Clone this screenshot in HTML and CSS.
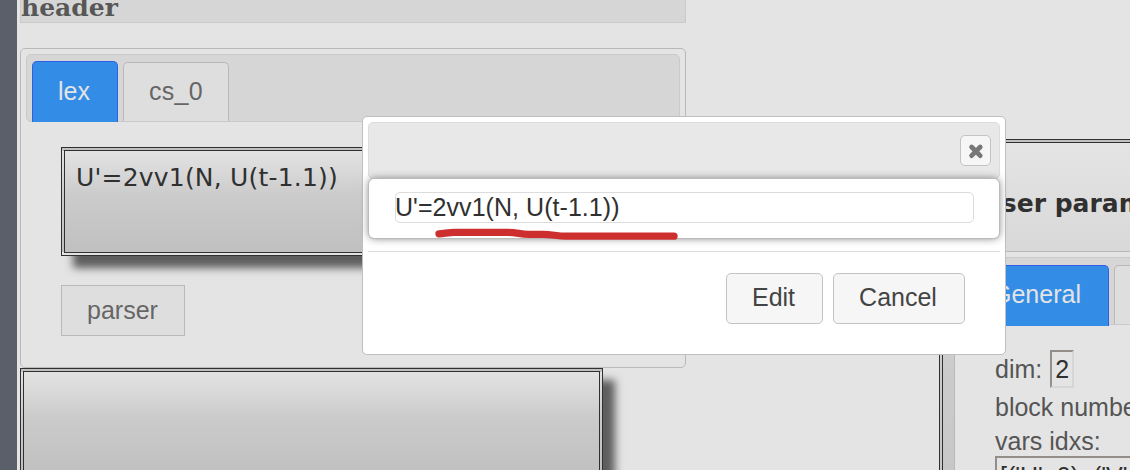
FILE: index.html
```
<!DOCTYPE html>
<html lang="en">
<head>
<meta charset="utf-8">
<title>Equation editor</title>
<link rel="stylesheet" href="styles.css">
</head>
<body>
<div class="app">
  <div class="rail"></div>
  <main class="left">
    <h3 class="header">header</h3>
    <section class="tabs">
      <nav class="tab-nav">
        <div class="tab active">lex</div>
        <div class="tab second">cs_0</div>
      </nav>
      <div class="tab-body">
        <div class="block equation">U'=2vv1(N, U(t-1.1))</div>
        <button class="parser">parser</button>
      </div>
    </section>
    <div class="block result"></div>
  </main>
  <aside class="params">
    <h3 class="params-title">Parser parameters</h3>
    <section class="params-tabs">
      <nav class="tab-nav params-nav">
        <div class="tab active">General</div>
        <div class="tab"></div>
      </nav>
      <div class="fields">
        <div class="field dim">dim: <span class="value">2</span></div>
        <div class="field number">block number:</div>
        <div class="field idxs">vars idxs:</div>
        <div class="value wide">[('U', 0), ('V', 1)]</div>
      </div>
    </section>
  </aside>
</div>
<div class="dialog">
  <div class="titlebar">
    <button class="close" aria-label="Close">
      <svg width="17" height="17" viewBox="0 0 17 17"><path d="M4.6 5L13.2 13.6M13.2 5L4.6 13.6" fill="none" stroke="#777" stroke-width="4.8" stroke-linecap="round"/></svg>
    </button>
  </div>
  <div class="dialog-content">
    <div class="entry"><span>U'=2vv1(N, U(t-1.1))</span></div>
    <svg class="stroke" width="244" height="14" viewBox="0 0 244 14"><path d="M4 6.8C11 6.2 13 5.3 20 5.3H73C82 5.3 85 7.3 94 7.3H108C117 7.3 122 9.2 131 9.2H239" fill="none" stroke="#cd2f2f" stroke-width="7.3" stroke-linecap="round" stroke-linejoin="round"/></svg>
  </div>
  <div class="buttons">
    <button class="btn edit">Edit</button>
    <button class="btn cancel">Cancel</button>
  </div>
</div>
</body>
</html>
```
FILE: styles.css
```
* { box-sizing: border-box; }
body {
  margin: 0;
  width: 1130px;
  height: 470px;
  overflow: hidden;
  background: #e4e4e4;
  font: 25px/30px "Liberation Sans", Arial, sans-serif;
  color: #555;
}
button { font: inherit; margin: 0; padding: 0; }
.app { display: flex; width: 1130px; height: 470px; overflow: hidden; }
.rail { width: 17px; flex: none; background: #5b5f69; }
.left { width: 666px; flex: none; margin-left: 3px; }
.header {
  height: 23px;
  margin: 0 0 25px;
  border: 1px solid #cacaca;
  border-top: 0;
  background: #d6d6d6;
  font: bold 25px/15px "DejaVu Serif", serif;
  color: #575757;
}
.tabs {
  height: 320px;
  padding: 5px;
  border: 1px solid #b9b9b9;
  border-radius: 5px;
}
.tab-nav {
  display: flex;
  align-items: flex-end;
  gap: 5px;
  height: 68px;
  padding-left: 5px;
  border: 1px solid #cacaca;
  border-radius: 5px;
  background: #d6d6d6;
}
.tab {
  flex: none;
  min-width: 86px;
  height: 59px;
  padding: 0 25px;
  border: 1px solid #b9b9b9;
  border-bottom: 0;
  border-radius: 5px 5px 0 0;
  background: #dedede;
  color: #666;
  line-height: 57px;
  white-space: nowrap;
}
.tab.second { width: 106px; letter-spacing: .25px; }
.tab.active {
  height: 61px;
  margin-bottom: -1px;
  border-color: #315fe6;
  background: #338de7;
  color: #e4e4e4;
  line-height: 59px;
}
.tab-body { padding: 25px 0 0 35px; }
.block {
  border: 4px double #303030;
  background: linear-gradient(#e3e3e3, #cbcbcb 45%, #c0c0c0);
  box-shadow: 12px 12px 8px #5e5e5e;
  height: 109px;
}
.equation {
  width: 583px;
  padding: 12px 11px;
  font: 25px/30px "DejaVu Sans", sans-serif;
  letter-spacing: .2px;
  color: #303030;
}
.parser {
  display: block;
  width: 124px;
  height: 51px;
  margin-top: 29px;
  padding: 0 1px 2px 0;
  border: 1px solid #b9b9b9;
  background: #dedede;
  color: #666;
}
.result { width: 583px; }
.params {
  width: 240px;
  flex: none;
  height: 520px;
  margin: 139px 0 0 253px;
  padding-left: 11px;
  border: 4px double #303030;
  background: linear-gradient(#e4e4e4, #cbcbcb 45%, #c0c0c0);
}
.params-title {
  height: 108px;
  margin: 0;
  padding-left: 1px;
  font: bold 25px/122px "DejaVu Sans", sans-serif;
  color: #303030;
  white-space: nowrap;
}
.params-tabs {
  width: 500px;
  height: 400px;
  padding: 5px;
  border: 1px solid #b9b9b9;
  background: #e4e4e4;
}
.params-nav { width: 400px; }
.params-nav .tab.active { width: 143px; margin-bottom: -2px; line-height: 57px; }
.fields { padding: 25px 0 0 35px; white-space: nowrap; }
.dim { height: 38px; line-height: 38px; display: flex; gap: 8px; }
.value {
  height: 38px;
  padding: 0 3px;
  border: 2px solid;
  border-color: #938f88 #d6d6d6 #d6d6d6 #938f88;
  color: #303030;
  line-height: 34px;
}
.number { height: 38px; line-height: 38px; }
.idxs { height: 30px; line-height: 30px; }
.wide { line-height: 36px; }
.dialog {
  position: absolute;
  left: 362px;
  top: 116px;
  width: 644px;
  height: 239px;
  padding: 5px;
  border: 1px solid #bfbfbf;
  border-radius: 5px;
  background: #fff;
}
.titlebar {
  display: flex;
  justify-content: flex-end;
  height: 57px;
  padding: 12px 8px 0 0;
  border: 1px solid #dcdcdc;
  border-radius: 5px;
  background: #e8e8e8;
}
.close {
  display: flex;
  align-items: center;
  justify-content: center;
  width: 31px;
  height: 31px;
  border: 1px solid #c3c3c3;
  border-radius: 5px;
  background: #f6f6f6;
}
.dialog-content {
  position: relative;
  height: 59px;
  margin: 0 1px;
  padding: 13px 25px 0 26px;
  border-radius: 5px;
  background: #fff;
  box-shadow: 0 0 0 1px #bbb, 0 0 8px #777;
}
.entry {
  height: 31px;
  border: 1px solid #dcdcdc;
  border-radius: 5px;
  color: #303030;
  line-height: 29px;
  white-space: nowrap;
}
.entry span { margin-left: -1px; letter-spacing: .05px; }
.stroke { position: absolute; left: 66px; top: 48px; }
.buttons {
  display: flex;
  gap: 10px;
  justify-content: flex-end;
  margin-top: 13px;
  padding: 21px 35px 0 0;
  border-top: 1px solid #dcdcdc;
}
.btn {
  height: 51px;
  border: 1px solid #c3c3c3;
  border-radius: 5px;
  background: #f6f6f6;
  color: #444;
  padding: 0 2px 3px 0;
}
.edit { width: 97px; }
.cancel { width: 132px; }
```
